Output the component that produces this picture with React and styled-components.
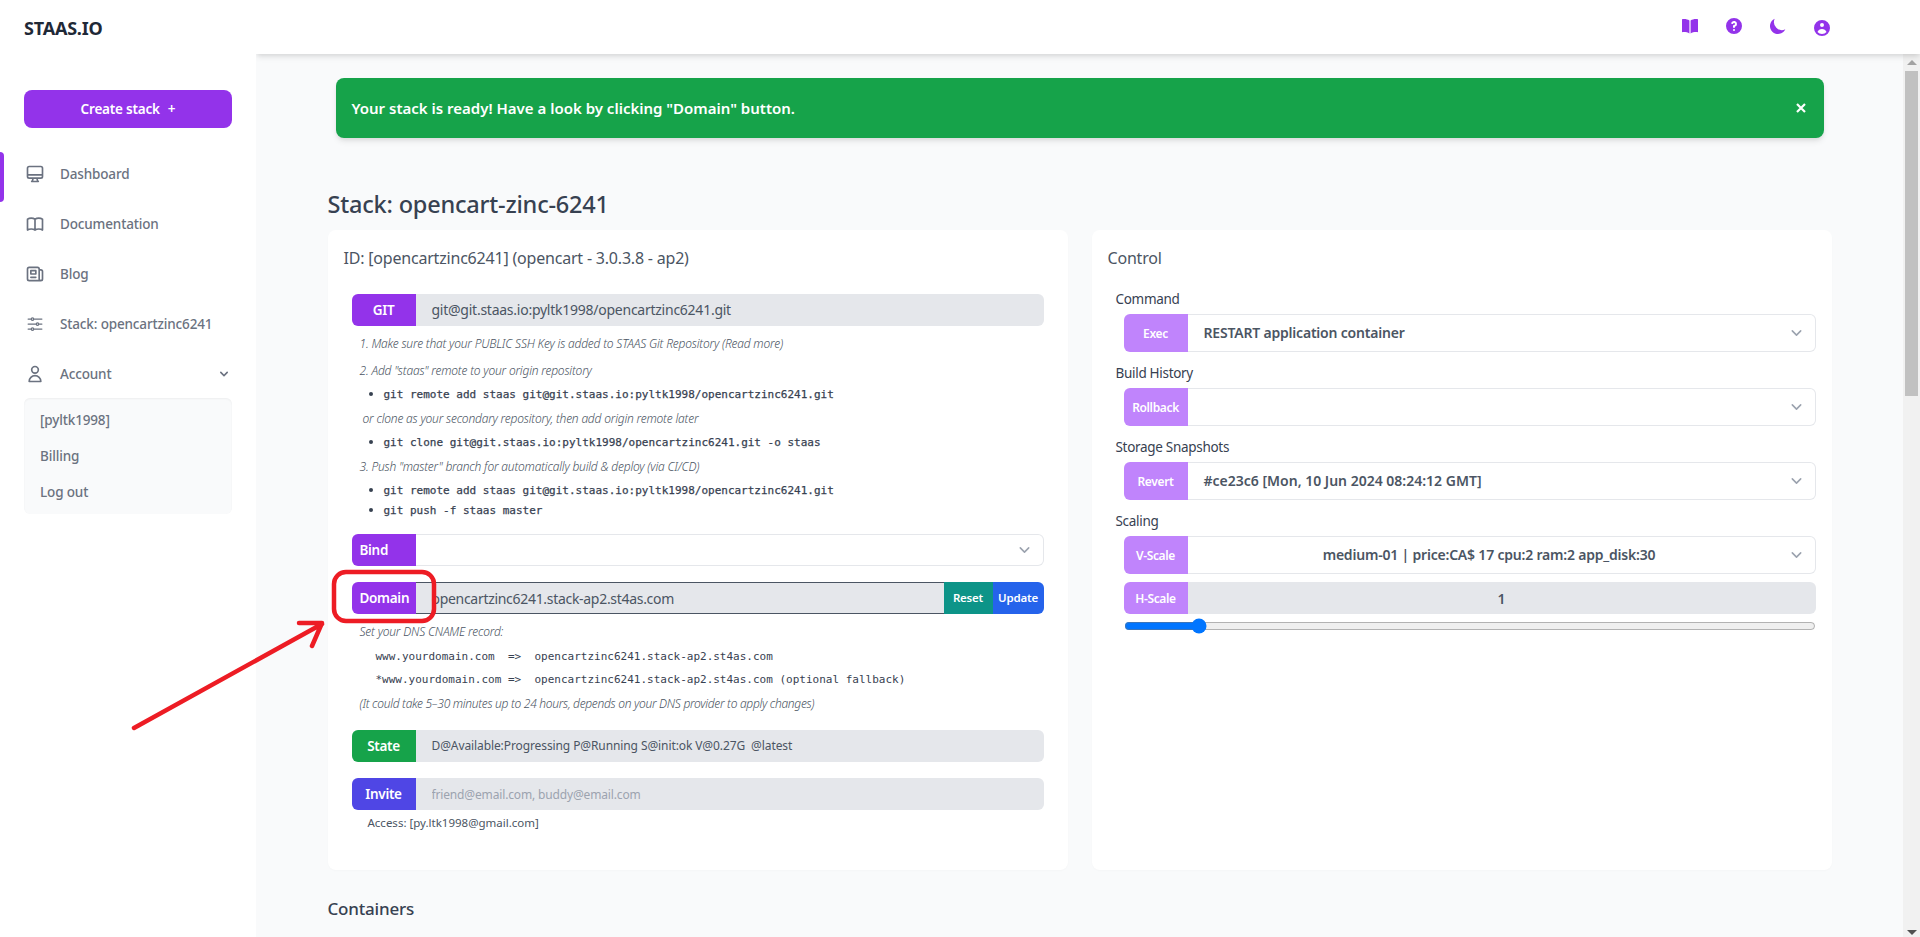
import React from "react";
import styled, { createGlobalStyle } from "styled-components";
import {
  HiOutlineDesktopComputer,
  HiOutlineBookOpen,
  HiOutlineNewspaper,
  HiOutlineUser,
  HiChevronDown,
  HiQuestionMarkCircle,
  HiMoon,
  HiUserCircle,
} from "react-icons/hi";
import { HiOutlineAdjustmentsHorizontal } from "react-icons/hi2";

const STACK = "opencartzinc6241";
const REPO = `git@git.staas.io:pyltk1998/${STACK}.git`;
const DOMAIN = `${STACK}.stack-ap2.st4as.com`;

const Caret = () => (
  <SelectCaret viewBox="0 0 20 20">
    <path d="M6 8l4 4 4-4" />
  </SelectCaret>
);

const App = () => {
  return (
    <Page>
      <GlobalStyle />
      <Sidebar>
        <Logo>STAAS.IO</Logo>
        <CreateButton>
          Create stack<span>+</span>
        </CreateButton>
        <Nav>
          <NavItem $active>
            <HiOutlineDesktopComputer size={20} />
            Dashboard
          </NavItem>
          <NavItem>
            <HiOutlineBookOpen size={20} />
            Documentation
          </NavItem>
          <NavItem>
            <HiOutlineNewspaper size={20} />
            Blog
          </NavItem>
          <NavItem>
            <HiOutlineAdjustmentsHorizontal size={20} />
            Stack: {STACK}
          </NavItem>
          <NavItem>
            <HiOutlineUser size={20} />
            Account
            <NavCaret>
              <HiChevronDown size={16} />
            </NavCaret>
          </NavItem>
        </Nav>
        <SubMenu>
          <SubItem>[pyltk1998]</SubItem>
          <SubItem>Billing</SubItem>
          <SubItem>Log out</SubItem>
        </SubMenu>
      </Sidebar>

      <Column>
        <Header>
          <HeaderIcons>
            <HeaderIcon>
              <svg width="20" height="20" viewBox="0 0 20 20" fill="currentColor">
                <path d="M2 3.2c2.8-.5 5.4 0 7.4 1.3v13c-2-1.2-4.6-1.7-7.4-1.3z" />
                <path d="M18 3.2c-2.8-.5-5.4 0-7.4 1.3v13c2-1.2 4.6-1.7 7.4-1.3z" />
              </svg>
            </HeaderIcon>
            <HeaderIcon>
              <HiQuestionMarkCircle size={20} />
            </HeaderIcon>
            <HeaderIcon>
              <HiMoon size={20} />
            </HeaderIcon>
            <HeaderIcon $drop>
              <HiUserCircle size={20} />
            </HeaderIcon>
          </HeaderIcons>
        </Header>

        <Body>
          <Main>
            <Container>
              <Alert>
                Your stack is ready! Have a look by clicking "Domain" button.
                <AlertClose viewBox="0 0 10 10">
                  <path d="M1 1L9 9M9 1L1 9" />
                </AlertClose>
              </Alert>
              <Title>Stack: opencart-zinc-6241</Title>
              <Cards>
                <Card>
                  <CardTitle>ID: [{STACK}] (opencart - 3.0.3.8 - ap2)</CardTitle>
                  <StackBody>
                    <Row>
                      <Label $bg="#9333ea" $center>GIT</Label>
                      <Value>{REPO}</Value>
                    </Row>
                    <Hint $gap={8}>
                      1. Make sure that your PUBLIC SSH Key is added to STAAS Git Repository (Read more)
                    </Hint>
                    <Hint $gap={7}>2. Add "staas" remote to your origin repository</Hint>
                    <Commands $gap={3}>
                      <li>git remote add staas {REPO}</li>
                    </Commands>
                    <Hint $gap={5} $indent={3}>
                      or clone as your secondary repository, then add origin remote later
                    </Hint>
                    <Commands $gap={3}>
                      <li>git clone {REPO} -o staas</li>
                    </Commands>
                    <Hint $gap={5}>3. Push "master" branch for automatically build &amp; deploy (via CI/CD)</Hint>
                    <Commands $gap={3}>
                      <li>git remote add staas {REPO}</li>
                      <li>git push -f staas master</li>
                    </Commands>

                    <Row $gap={14}>
                      <Label $bg="#9333ea">Bind</Label>
                      <SelectBox>
                        <Caret />
                      </SelectBox>
                    </Row>

                    <Row $gap={16}>
                      <Label $bg="#9333ea">Domain</Label>
                      <DomainValue>{DOMAIN}</DomainValue>
                      <RowButton $bg="#0d9488" $w={49}>Reset</RowButton>
                      <RowButton $bg="#2563eb" $w={51} $last>Update</RowButton>
                    </Row>
                    <Hint $gap={8}>Set your DNS CNAME record:</Hint>
                    <Record $gap={5}>{`www.yourdomain.com  =>  ${DOMAIN}`}</Record>
                    <Record $gap={3}>{`*www.yourdomain.com =>  ${DOMAIN} (optional fallback)`}</Record>
                    <Hint $gap={4} $tight>
                      (It could take 5–30 minutes up to 24 hours, depends on your DNS provider to apply changes)
                    </Hint>

                    <Row $gap={16}>
                      <Label $bg="#16a34a" $center>State</Label>
                      <Value $small>D@Available:Progressing P@Running S@init:ok V@0.27G &nbsp;@latest</Value>
                    </Row>
                    <Row $gap={16}>
                      <Label $bg="#4f46e5" $center>Invite</Label>
                      <InviteInput placeholder="friend@email.com, buddy@email.com" />
                    </Row>
                    <Access>Access: [py.ltk1998@gmail.com]</Access>
                  </StackBody>
                </Card>

                <Card>
                  <CardTitle>Control</CardTitle>
                  <ControlGroup $first>
                    <ControlLabel>Command</ControlLabel>
                    <ControlRow label="Exec" text="RESTART application container" />
                  </ControlGroup>
                  <ControlGroup>
                    <ControlLabel>Build History</ControlLabel>
                    <ControlRow label="Rollback" />
                  </ControlGroup>
                  <ControlGroup>
                    <ControlLabel>Storage Snapshots</ControlLabel>
                    <ControlRow label="Revert" text="#ce23c6 [Mon, 10 Jun 2024 08:24:12 GMT]" wide />
                  </ControlGroup>
                  <ControlGroup>
                    <ControlLabel>Scaling</ControlLabel>
                    <ControlRow label="V-Scale" text="medium-01 | price:CA$ 17 cpu:2 ram:2 app_disk:30" center />
                    <ScaleRow>
                      <SmallLabel>H-Scale</SmallLabel>
                      <ScaleValue>1</ScaleValue>
                    </ScaleRow>
                    <Slider type="range" min="0" max="10" defaultValue="1" />
                  </ControlGroup>
                </Card>
              </Cards>
              <SectionTitle>Containers</SectionTitle>
            </Container>
          </Main>
          <ScrollTrack>
            <ScrollUp />
            <ScrollThumb />
            <ScrollDown />
          </ScrollTrack>
        </Body>
      </Column>

      <Annotation viewBox="0 0 1920 937">
        <rect x="334" y="572" width="100" height="49" rx="12" />
        <path d="M134 728 L322 624 M299 623 L322 623 L312 646" />
      </Annotation>
    </Page>
  );
};

const ControlRow = ({ label, text, center, wide }) => (
  <SelectRow>
    <SmallLabel>{label}</SmallLabel>
    <SelectText $center={center} $wide={wide}>
      {text}
      <Caret />
    </SelectText>
  </SelectRow>
);

const GlobalStyle = createGlobalStyle`
  * {
    box-sizing: border-box;
  }
  html, body {
    margin: 0;
    height: 100%;
    overflow: hidden;
  }
  body {
    font-family: "Noto Sans", "Open Sans", sans-serif;
    font-size: 14px;
    color: #374151;
  }
`;

const Page = styled.div`
  display: flex;
  position: relative;
  width: 100%;
  height: 937px;
  overflow: hidden;
  background: #ffffff;
`;

const Sidebar = styled.aside`
  width: 256px;
  flex-shrink: 0;
  background: #ffffff;
  position: relative;
  z-index: 20;
`;

const Logo = styled.div`
  height: 57px;
  padding-left: 24px;
  line-height: 57px;
  font-size: 18px;
  font-weight: 700;
  letter-spacing: -0.2px;
  color: #1f2937;
`;

const CreateButton = styled.button`
  display: block;
  width: 208px;
  height: 38px;
  margin: 33px 0 0 24px;
  border: 0;
  border-radius: 8px;
  background: #9333ea;
  color: #ffffff;
  font: 600 13.5px "Noto Sans", sans-serif;
  letter-spacing: -0.2px;
  span {
    margin-left: 8px;
  }
`;

const Nav = styled.nav`
  margin-top: 24px;
`;

const NavItem = styled.div`
  display: flex;
  align-items: center;
  position: relative;
  height: 50px;
  padding: 0 24px 6px 25px;
  gap: 15px;
  font-size: 13.5px;
  font-weight: 500;
  letter-spacing: -0.15px;
  color: #6b7280;
  &::before {
    content: "";
    display: ${(p) => (p.$active ? "block" : "none")};
    position: absolute;
    left: 0;
    top: 0;
    bottom: 0;
    width: 4px;
    border-radius: 0 4px 4px 0;
    background: #9333ea;
  }
`;

const NavCaret = styled.span`
  display: flex;
  margin-left: auto;
`;

const SubMenu = styled.div`
  width: 208px;
  height: 116px;
  margin: -4px 0 0 24px;
  padding: 4px 16px;
  border-radius: 6px;
  background: #f9fafb;
  box-shadow: inset 0 1px 2px rgba(0, 0, 0, 0.05);
`;

const SubItem = styled.div`
  height: 36px;
  line-height: 36px;
  font-size: 13.5px;
  font-weight: 500;
  letter-spacing: -0.15px;
  color: #6b7280;
`;

const Column = styled.div`
  flex: 1;
  min-width: 0;
  display: flex;
  flex-direction: column;
`;

const Header = styled.header`
  height: 54px;
  flex-shrink: 0;
  display: flex;
  justify-content: flex-end;
  position: relative;
  z-index: 10;
  background: #ffffff;
  box-shadow: 0 4px 6px -1px rgba(0, 0, 0, 0.1), 0 2px 4px -1px rgba(0, 0, 0, 0.06);
`;

const HeaderIcons = styled.div`
  display: flex;
  align-items: center;
  gap: 24px;
  padding: 0 88px 2px 0;
`;

const HeaderIcon = styled.span`
  display: flex;
  color: #9333ea;
  padding-top: ${(p) => (p.$drop ? "4px" : "0")};
`;

const Body = styled.div`
  flex: 1;
  min-height: 0;
  display: flex;
`;

const Main = styled.main`
  flex: 1;
  min-width: 0;
  overflow: hidden;
  background: #f9fafb;
`;

const Container = styled.div`
  width: 1504px;
  margin: 0 auto;
`;

const Alert = styled.div`
  display: flex;
  align-items: center;
  justify-content: space-between;
  height: 60px;
  margin: 24px 8px 0;
  padding: 0 16px;
  border-radius: 8px;
  background: #16a34a;
  color: #ffffff;
  font-size: 15px;
  font-weight: 600;
  box-shadow: 0 4px 6px -1px rgba(0, 0, 0, 0.1), 0 2px 4px -1px rgba(0, 0, 0, 0.06);
`;

const AlertClose = styled.svg`
  width: 10px;
  height: 10px;
  margin-right: 2px;
  fill: none;
  stroke: #ffffff;
  stroke-width: 2.2;
`;

const Title = styled.h2`
  margin: 48px 0 0;
  height: 44px;
  line-height: 36px;
  font-size: 23.5px;
  font-weight: 500;
  letter-spacing: -0.2px;
  color: #374151;
`;

const Cards = styled.div`
  display: grid;
  grid-template-columns: 740px 740px;
  column-gap: 24px;
`;

const Card = styled.section`
  height: 640px;
  padding-top: 16px;
  border-radius: 8px;
  background: #ffffff;
  box-shadow: 0 1px 2px rgba(0, 0, 0, 0.02);
`;

const CardTitle = styled.h4`
  margin: 0;
  padding-left: 16px;
  line-height: 24px;
  font-size: 16px;
  font-weight: 400;
  letter-spacing: -0.2px;
  color: #4b5563;
`;

const StackBody = styled.div`
  margin: 24px 24px 0;
`;

const Row = styled.div`
  display: flex;
  height: 32px;
  margin-top: ${(p) => p.$gap || 0}px;
`;

const Label = styled.div`
  width: 64px;
  flex-shrink: 0;
  padding: ${(p) => (p.$center ? "0" : "0 0 0 8px")};
  line-height: 33px;
  text-align: ${(p) => (p.$center ? "center" : "left")};
  border-radius: 6px 0 0 6px;
  background: ${(p) => p.$bg};
  color: #ffffff;
  font-size: 13.5px;
  font-weight: 600;
  letter-spacing: -0.3px;
  white-space: nowrap;
`;

const Value = styled.div`
  flex: 1;
  padding-left: 16px;
  line-height: 32px;
  border-radius: 0 6px 6px 0;
  background: #e5e7eb;
  color: #4b5563;
  font-size: ${(p) => (p.$small ? "12px" : "14px")};
  letter-spacing: ${(p) => (p.$small ? "-0.1px" : "-0.25px")};
`;

const DomainValue = styled.div`
  flex: 1;
  padding-left: 16px;
  line-height: 31px;
  border-top: 1px solid #4b5563;
  border-bottom: 1px solid #4b5563;
  background: #e5e7eb;
  color: #4b5563;
  font-size: 14px;
  letter-spacing: -0.3px;
`;

const RowButton = styled.div`
  width: ${(p) => p.$w}px;
  line-height: 32px;
  text-align: center;
  border-radius: ${(p) => (p.$last ? "0 6px 6px 0" : "0")};
  background: ${(p) => p.$bg};
  color: #ffffff;
  font-size: 11.5px;
  font-weight: 600;
  letter-spacing: -0.2px;
`;

const InviteInput = styled.input`
  flex: 1;
  padding: 0 0 0 16px;
  border: 0;
  outline: 0;
  border-radius: 0 6px 6px 0;
  background: #e5e7eb;
  font: 12px "Noto Sans", sans-serif;
  letter-spacing: -0.15px;
  &::placeholder {
    color: #9ca3af;
    opacity: 1;
  }
`;

const Hint = styled.p`
  margin: ${(p) => p.$gap}px 0 0 ${(p) => 8 + (p.$indent || 0)}px;
  height: 20px;
  line-height: 20px;
  font-size: 12px;
  font-style: italic;
  font-weight: 300;
  letter-spacing: ${(p) => (p.$tight ? "-0.3px" : "-0.2px")};
  color: #4b5563;
  white-space: nowrap;
`;

const Commands = styled.ul`
  margin: ${(p) => p.$gap}px 0 0;
  padding: 0 0 0 32px;
  list-style: disc;
  li {
    height: 20px;
    line-height: 20px;
    font-family: "DejaVu Sans Mono", monospace;
    font-size: 11px;
    color: #374151;
    -webkit-text-stroke: 0.25px #374151;
    white-space: pre;
  }
  li::marker {
    font-size: 13px;
  }
`;

const Record = styled.pre`
  margin: ${(p) => p.$gap}px 0 0 24px;
  height: 20px;
  line-height: 20px;
  font-family: "DejaVu Sans Mono", monospace;
  font-size: 11px;
  color: #374151;
`;

const Access = styled.div`
  margin: 3px 0 0 16px;
  line-height: 20px;
  font-size: 11.5px;
  color: #4b5563;
`;

const SelectBox = styled.div`
  flex: 1;
  position: relative;
  border: 1px solid #e5e7eb;
  border-left: 0;
  border-radius: 0 6px 6px 0;
  background: #ffffff;
`;

const SelectCaret = styled.svg`
  position: absolute;
  right: 8px;
  top: 50%;
  width: 21px;
  height: 21px;
  transform: translateY(-50%);
  fill: none;
  stroke: #9ca3af;
  stroke-width: 1.5;
  stroke-linecap: round;
  stroke-linejoin: round;
`;

const ControlGroup = styled.div`
  margin: ${(p) => (p.$first ? "19px" : "11px")} 16px 0 24px;
`;

const ControlLabel = styled.div`
  line-height: 20px;
  font-size: 13.5px;
  letter-spacing: -0.3px;
  color: #374151;
`;

const SelectRow = styled.div`
  display: flex;
  height: 38px;
  margin: 5px 0 0 8px;
`;

const SmallLabel = styled.div`
  width: 64px;
  flex-shrink: 0;
  display: flex;
  align-items: center;
  justify-content: center;
  border-radius: 6px 0 0 6px;
  background: #c084fc;
  color: #ffffff;
  font-size: 12px;
  font-weight: 600;
  letter-spacing: -0.35px;
`;

const SelectText = styled.div`
  flex: 1;
  position: relative;
  padding: 0 40px 0 16px;
  line-height: 36px;
  text-align: ${(p) => (p.$center ? "center" : "left")};
  border: 1px solid #e5e7eb;
  border-left: 0;
  border-radius: 0 6px 6px 0;
  background: #ffffff;
  color: #4b5563;
  font-size: 14px;
  font-weight: 600;
  letter-spacing: ${(p) => (p.$wide ? "0" : "-0.2px")};
`;

const ScaleRow = styled.div`
  display: flex;
  height: 32px;
  margin: 8px 0 0 8px;
`;

const ScaleValue = styled.div`
  flex: 1;
  line-height: 33px;
  text-align: center;
  border-radius: 0 6px 6px 0;
  background: #e5e7eb;
  color: #4b5563;
  font-size: 14px;
  font-weight: 600;
`;

const Slider = styled.input`
  display: block;
  width: 692px;
  height: 16px;
  margin: 4px 0 0 8px;
`;

const SectionTitle = styled.h3`
  margin: 25px 0 0;
  line-height: 28px;
  font-size: 17px;
  font-weight: 500;
  letter-spacing: -0.2px;
  color: #374151;
`;

const ScrollTrack = styled.div`
  width: 17px;
  flex-shrink: 0;
  display: flex;
  flex-direction: column;
  align-items: center;
  background: #f1f1f1;
`;

const ScrollUp = styled.div`
  margin-top: 6px;
  border-style: solid;
  border-color: transparent;
  border-width: 0 5px 5px;
  border-bottom-color: #a3a3a3;
`;

const ScrollThumb = styled.div`
  width: 13px;
  height: 325px;
  margin-top: 6px;
  background: #c1c1c1;
`;

const ScrollDown = styled.div`
  margin-top: auto;
  margin-bottom: 2px;
  border-style: solid;
  border-color: transparent;
  border-width: 5px 5px 0;
  border-top-color: #505050;
`;

const Annotation = styled.svg`
  position: absolute;
  inset: 0;
  width: 1920px;
  height: 937px;
  z-index: 30;
  pointer-events: none;
  fill: none;
  stroke: #ed1c24;
  stroke-width: 4.5;
  stroke-linecap: round;
  stroke-linejoin: round;
`;

export default App;
